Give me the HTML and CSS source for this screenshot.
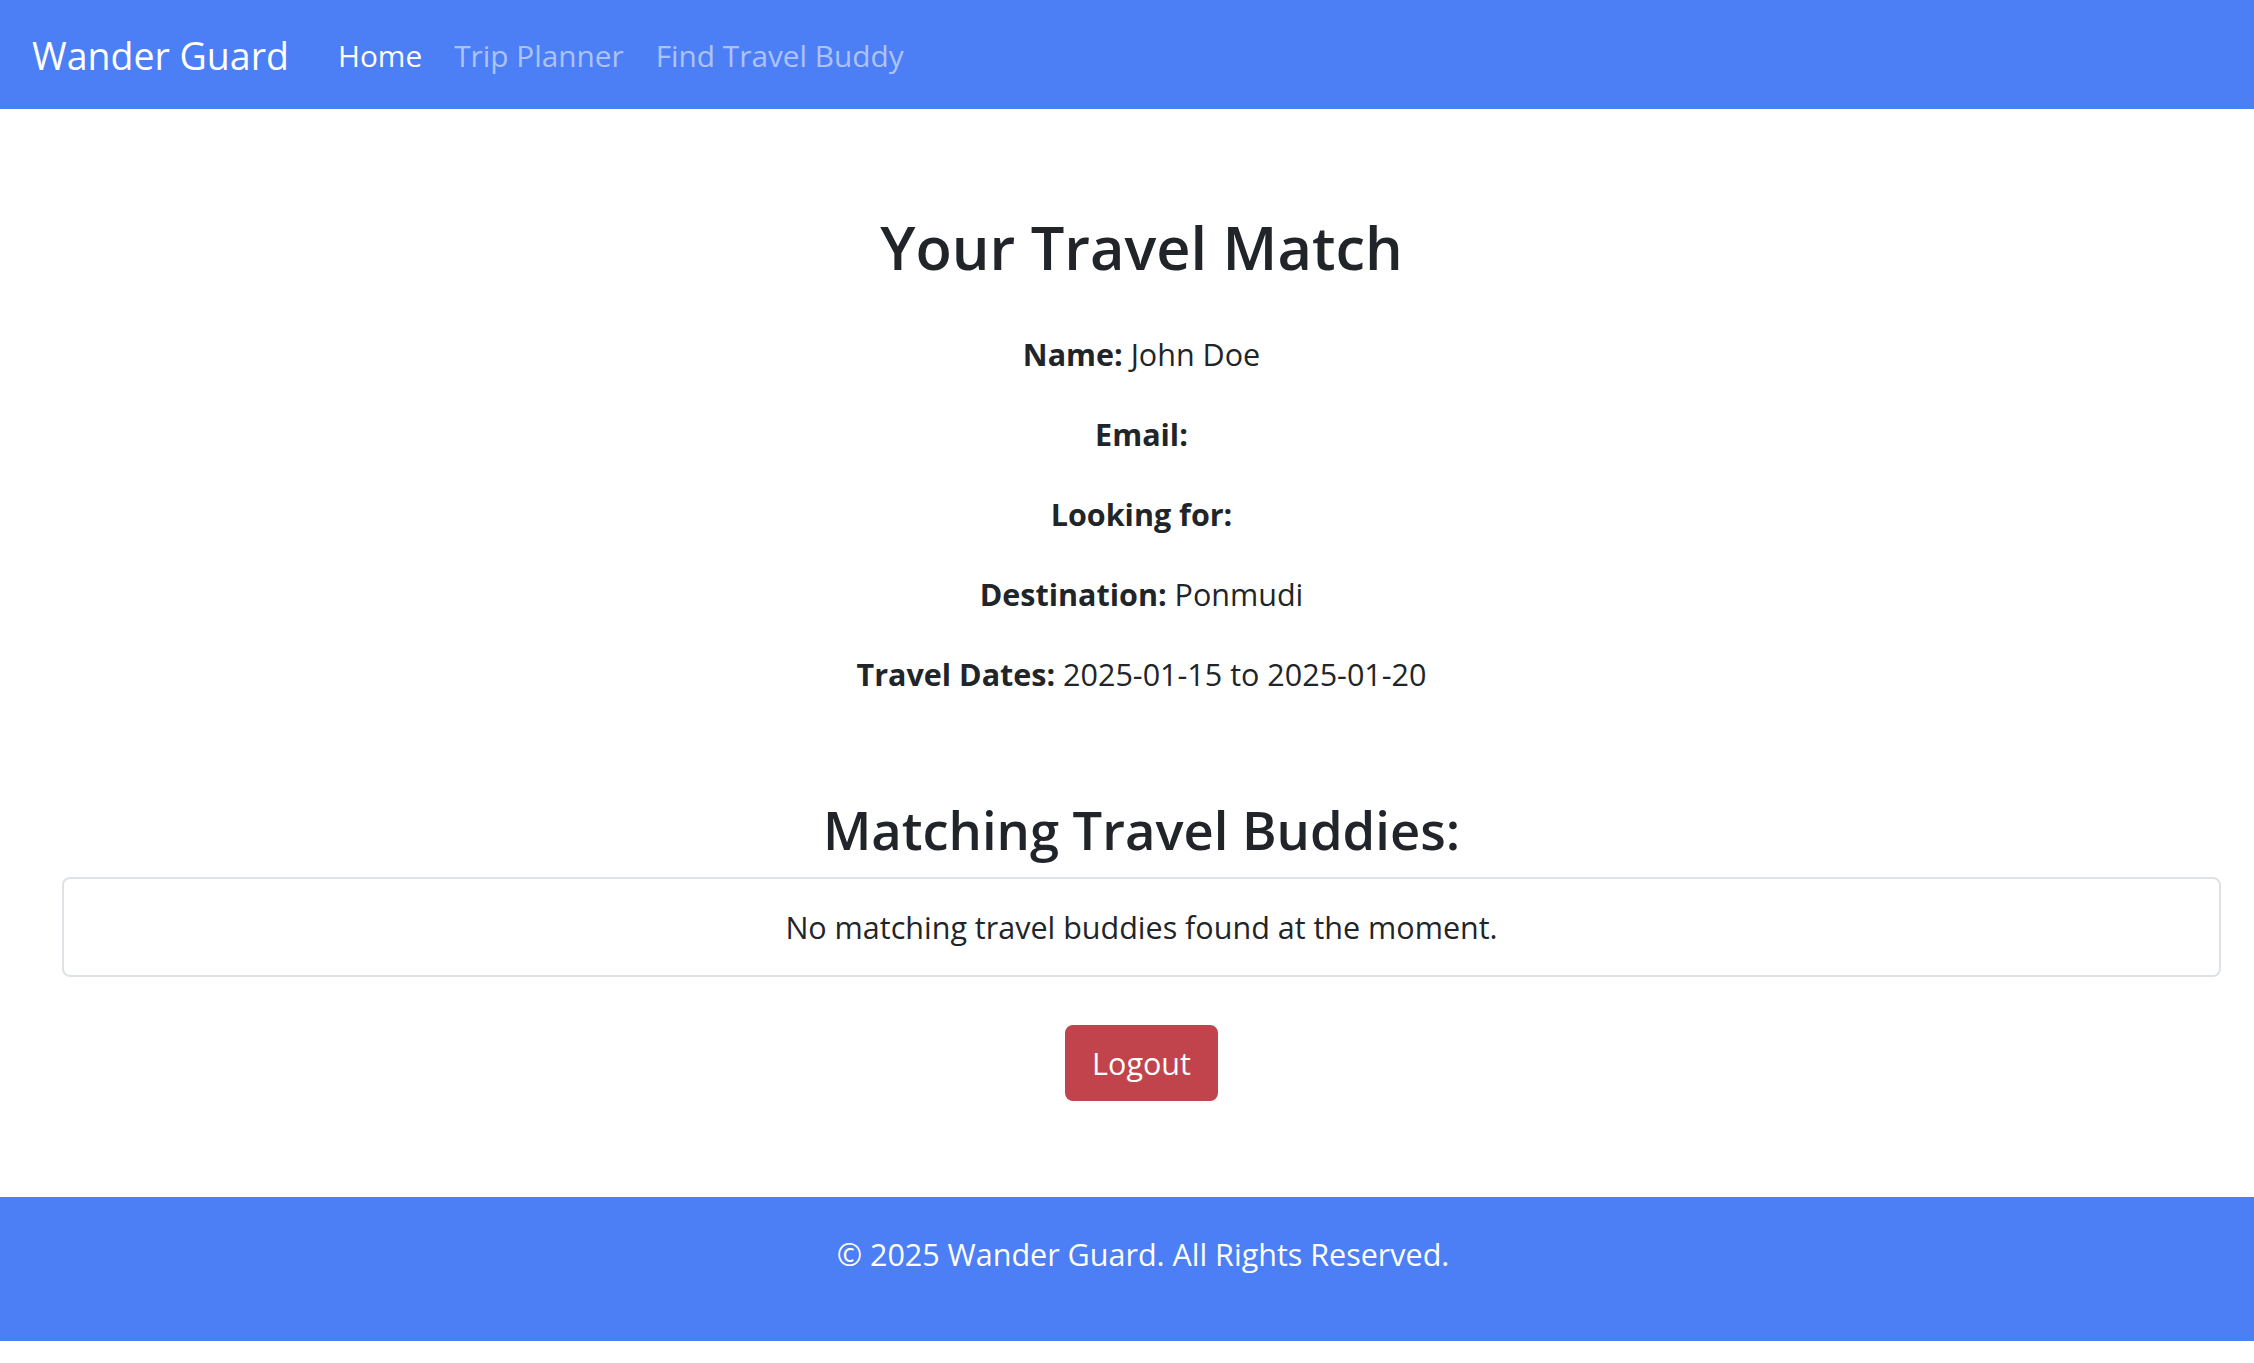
FILE: index.html
```html
<!DOCTYPE html>
<html lang="en">
<head>
<meta charset="utf-8">
<title>Wander Guard - Your Travel Match</title>
<link rel="stylesheet" href="styles.css">
</head>
<body>
<nav class="navbar">
  <a class="brand" href="#">Wander Guard</a>
  <ul class="nav-links">
    <li><a class="nav-link active" href="#">Home</a></li>
    <li><a class="nav-link" href="#">Trip Planner</a></li>
    <li><a class="nav-link" href="#">Find Travel Buddy</a></li>
  </ul>
</nav>

<main class="main">
  <h1 class="title">Your Travel Match</h1>
  <div class="info">
    <p><strong>Name:</strong> John Doe</p>
    <p><strong>Email:</strong> </p>
    <p><strong>Looking for:</strong> </p>
    <p><strong>Destination:</strong> Ponmudi</p>
    <p><strong>Travel Dates:</strong> 2025-01-15 to 2025-01-20</p>
  </div>

  <h3 class="subtitle">Matching Travel Buddies:</h3>
  <ul class="list-group">
    <li class="list-item">No matching travel buddies found at the moment.</li>
  </ul>

  <div class="actions">
    <a class="btn-danger" href="#">Logout</a>
  </div>
</main>

<footer class="footer">
  <p>&copy; 2025 Wander Guard. All Rights Reserved.</p>
</footer>
</body>
</html>
```
FILE: styles.css
```css
* { box-sizing: border-box; }

html, body {
  margin: 0;
  padding: 0;
  background: #ffffff;
}

body {
  font-family: "Open Sans", "Noto Sans", sans-serif;
  font-size: 30.5px;
  line-height: 48px;
  color: #212529;
}

a { text-decoration: none; }

/* Navbar */
.navbar {
  display: flex;
  align-items: center;
  height: 109px;
  padding: 2px 32px 0;
  background: #4c7ef6;
}

.brand {
  color: #ffffff;
  font-size: 37.5px;
  line-height: 56px;
  margin-right: 33px;
}

.nav-links {
  display: flex;
  list-style: none;
  margin: 0;
  padding: 0;
}

.nav-link {
  display: block;
  padding: 0 16px;
  font-size: 29.8px;
  line-height: 48px;
  color: rgba(255, 255, 255, 0.55);
}

.nav-link.active { color: #ffffff; }

/* Main */
.main {
  padding: 0 33px 0 62px;
  text-align: center;
}

.title {
  margin: 99px 0 45px;
  font-size: 59.5px;
  line-height: 77px;
  font-weight: 600;
}

.info {
  display: flex;
  flex-direction: column;
  gap: 32px;
}

.info p {
  margin: 0;
  min-height: 48px;
}

.info strong { font-weight: 700; }

.subtitle {
  margin: 98px 0 14px;
  font-size: 52.5px;
  line-height: 67px;
  font-weight: 600;
}

.list-group {
  list-style: none;
  margin: 0;
  padding: 0;
}

.list-item {
  border: 2px solid #dee2e6;
  border-radius: 8px;
  padding: 24px 40px;
}

.actions {
  margin-top: 48px;
  display: flex;
  justify-content: center;
}

.btn-danger {
  display: inline-block;
  min-width: 153px;
  height: 76px;
  padding: 12px 24px;
  border: 2px solid #c1444c;
  border-radius: 8px;
  background: #c1444c;
  color: #ffffff;
  font-size: 30.5px;
  line-height: 48px;
  text-align: center;
}

/* Footer */
.footer {
  margin-top: 96px;
  padding: 33px 0 31px 32px;
  background: #4c7ef6;
  color: #ffffff;
  text-align: center;
}

.footer p {
  margin: 0 0 32px;
}
```
